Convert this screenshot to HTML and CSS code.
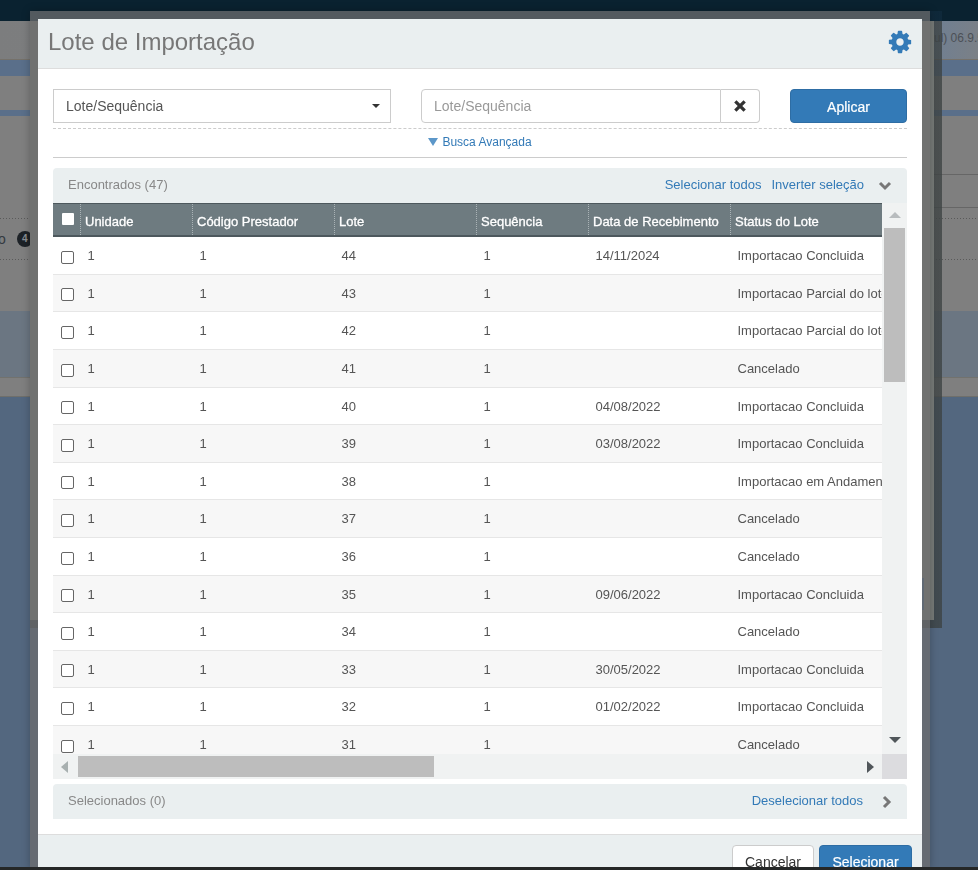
FILE: index.html
```html
<!DOCTYPE html>
<html lang="pt-BR">
<head>
<meta charset="utf-8">
<title>Lote de Importação</title>
<link rel="stylesheet" href="styles.css">
</head>
<body>
<div class="page">
  <div class="top"></div>
  <div class="pagehead"><span class="version">(Azul) 06.9.5</span></div>
  <div class="band band-a"></div>
  <div class="gray gray-a"></div>
  <div class="band band-b"></div>
  <div class="gray gray-b">
    <div class="badge-row"><span>o</span><b class="badge">4</b></div>
  </div>
  <div class="slate"></div>
  <div class="gray gray-c"></div>
</div>

<div class="layer layer-back"></div>
<div class="layer layer-mid"><i class="mid-btn"></i></div>
<div class="layer layer-veil"></div>

<main class="modal">
  <header class="modal-head">
    <h1>Lote de Importação</h1>
    <svg class="gear" viewBox="0 0 1792 1792"><path d="M1152 896q0-106-75-181t-181-75-181 75-75 181 75 181 181 75 181-75 75-181zm512-109v222q0 12-8 23t-20 13l-185 28q-19 54-39 91 35 50 107 138 10 12 10 25t-9 23q-27 37-99 108t-94 71q-12 0-26-9l-138-108q-44 23-91 38-16 136-29 186-7 28-36 28h-222q-14 0-24.5-8.5t-11.5-21.5l-28-184q-49-16-90-37l-141 107q-10 9-25 9-14 0-25-11-126-114-165-168-7-10-7-23 0-12 8-23 15-21 51-66.5t54-70.5q-27-50-41-99l-183-27q-13-2-21-12.5t-8-23.5v-222q0-12 8-23t19-13l186-28q14-46 39-92-40-57-107-138-10-12-10-24 0-10 9-23 26-36 98.5-107.5t94.5-71.5q13 0 26 10l138 107q44-23 91-38 16-136 29-186 7-28 36-28h222q14 0 24.5 8.5t11.5 21.5l28 184q49 16 90 37l142-107q9-9 24-9 13 0 25 10 129 119 165 170 7 8 7 22 0 12-8 23-15 21-51 66.5t-54 70.5q26 50 41 98l183 28q13 2 21 12.5t8 23.5z"/></svg>
  </header>

  <div class="modal-body">
    <div class="filters">
      <div class="select">Lote/Sequência<i class="caret"></i></div>
      <div class="search">
        <div class="search-input">Lote/Sequência</div>
        <div class="search-clear"><svg viewBox="0 0 12 12"><path d="M2 2l8 8M10 2l-8 8"/></svg></div>
      </div>
      <div class="apply">Aplicar</div>
    </div>
    <div class="advanced"><i class="adv-arrow"></i>Busca Avançada</div>

    <section class="found">
      <div class="panel-head">
        <span class="panel-title">Encontrados (47)</span>
        <span class="panel-links"><a>Selecionar todos</a><a>Inverter seleção</a></span>
        <svg class="chev" viewBox="0 0 14 10"><path d="M2 2l5 5 5-5"/></svg>
      </div>
      <div class="grid-wrap">
        <div class="viewport">
          <div class="row head">
            <div class="cell"><i class="check-head"></i></div>
            <div class="cell">Unidade</div>
            <div class="cell">Código Prestador</div>
            <div class="cell">Lote</div>
            <div class="cell">Sequência</div>
            <div class="cell">Data de Recebimento</div>
            <div class="cell">Status do Lote</div>
          </div>
          <div class="row"><div class="cell"><i class="check"></i></div><div class="cell">1</div><div class="cell">1</div><div class="cell">44</div><div class="cell">1</div><div class="cell">14/11/2024</div><div class="cell">Importacao Concluida</div></div>
          <div class="row"><div class="cell"><i class="check"></i></div><div class="cell">1</div><div class="cell">1</div><div class="cell">43</div><div class="cell">1</div><div class="cell"></div><div class="cell">Importacao Parcial do lote</div></div>
          <div class="row"><div class="cell"><i class="check"></i></div><div class="cell">1</div><div class="cell">1</div><div class="cell">42</div><div class="cell">1</div><div class="cell"></div><div class="cell">Importacao Parcial do lote</div></div>
          <div class="row"><div class="cell"><i class="check"></i></div><div class="cell">1</div><div class="cell">1</div><div class="cell">41</div><div class="cell">1</div><div class="cell"></div><div class="cell">Cancelado</div></div>
          <div class="row"><div class="cell"><i class="check"></i></div><div class="cell">1</div><div class="cell">1</div><div class="cell">40</div><div class="cell">1</div><div class="cell">04/08/2022</div><div class="cell">Importacao Concluida</div></div>
          <div class="row"><div class="cell"><i class="check"></i></div><div class="cell">1</div><div class="cell">1</div><div class="cell">39</div><div class="cell">1</div><div class="cell">03/08/2022</div><div class="cell">Importacao Concluida</div></div>
          <div class="row"><div class="cell"><i class="check"></i></div><div class="cell">1</div><div class="cell">1</div><div class="cell">38</div><div class="cell">1</div><div class="cell"></div><div class="cell">Importacao em Andamento</div></div>
          <div class="row"><div class="cell"><i class="check"></i></div><div class="cell">1</div><div class="cell">1</div><div class="cell">37</div><div class="cell">1</div><div class="cell"></div><div class="cell">Cancelado</div></div>
          <div class="row"><div class="cell"><i class="check"></i></div><div class="cell">1</div><div class="cell">1</div><div class="cell">36</div><div class="cell">1</div><div class="cell"></div><div class="cell">Cancelado</div></div>
          <div class="row"><div class="cell"><i class="check"></i></div><div class="cell">1</div><div class="cell">1</div><div class="cell">35</div><div class="cell">1</div><div class="cell">09/06/2022</div><div class="cell">Importacao Concluida</div></div>
          <div class="row"><div class="cell"><i class="check"></i></div><div class="cell">1</div><div class="cell">1</div><div class="cell">34</div><div class="cell">1</div><div class="cell"></div><div class="cell">Cancelado</div></div>
          <div class="row"><div class="cell"><i class="check"></i></div><div class="cell">1</div><div class="cell">1</div><div class="cell">33</div><div class="cell">1</div><div class="cell">30/05/2022</div><div class="cell">Importacao Concluida</div></div>
          <div class="row"><div class="cell"><i class="check"></i></div><div class="cell">1</div><div class="cell">1</div><div class="cell">32</div><div class="cell">1</div><div class="cell">01/02/2022</div><div class="cell">Importacao Concluida</div></div>
          <div class="row"><div class="cell"><i class="check"></i></div><div class="cell">1</div><div class="cell">1</div><div class="cell">31</div><div class="cell">1</div><div class="cell"></div><div class="cell">Cancelado</div></div>
        </div>
        <div class="vbar">
          <i class="arr arr-up"></i>
          <i class="vthumb"></i>
          <i class="arr arr-down"></i>
        </div>
        <div class="hbar">
          <i class="arr arr-left"></i>
          <i class="hthumb"></i>
          <i class="arr arr-right"></i>
        </div>
        <div class="corner"></div>
      </div>
    </section>

    <section class="selected">
      <span class="panel-title">Selecionados (0)</span>
      <span class="panel-links"><a>Deselecionar todos</a></span>
      <svg class="chev chev-right" viewBox="0 0 10 14"><path d="M2 2l5 5-5 5"/></svg>
    </section>
  </div>

  <footer class="modal-foot">
    <div class="btn btn-cancel">Cancelar</div>
    <div class="btn btn-select">Selecionar</div>
  </footer>
</main>
<div class="strip"></div>
</body>
</html>
```
FILE: styles.css
```css
* { box-sizing: border-box; }
html, body { margin: 0; height: 870px; overflow: hidden; }
body { background: #53677f; font-family: "Liberation Sans", Arial, sans-serif; color: #555; position: relative; width: 978px; }

/* page behind the dialogs */
.page { display: flex; flex-direction: column; height: 870px; }
.top { height: 21px; background: #0a2230; }
.pagehead { height: 39px; background: linear-gradient(100deg, #7c7d7e 0, #7f8285 60%, #6f7f92 95%, #7b8086 100%); border-bottom: 1px solid #75716a; display: flex; justify-content: flex-end; align-items: center; overflow: hidden; }
.version { font-size: 12px; color: #4c5056; white-space: nowrap; margin-right: -6px; position: relative; top: -2px; }
.band { background: #5a6f8a; }
.band-a { height: 16px; }
.band-b { height: 6px; }
.gray { background: #7f7f7f; }
.gray-a { height: 34px; }
.gray-b { height: 195px; position: relative; background:
  linear-gradient(#666, #666) right 58px / 60px 1px no-repeat,
  linear-gradient(#666, #666) right 91px / 60px 1px no-repeat,
  repeating-linear-gradient(90deg, #5a5a5a 0 1px, transparent 1px 3px) 0 102px / 100% 1px no-repeat,
  repeating-linear-gradient(90deg, #5a5a5a 0 1px, transparent 1px 3px) 0 143px / 100% 1px no-repeat,
  #7f7f7f; }
.badge-row { display: flex; align-items: center; gap: 11px; padding-top: 115px; font-size: 14px; color: #333a40; overflow: hidden; }
.badge-row span { margin-left: -2px; }
.badge { width: 16px; height: 16px; border-radius: 50%; background: #1d2227; color: #8a8f94; font-size: 10px; text-align: center; line-height: 16px; }
.slate { height: 66px; background: #6b7682; }
.gray-c { height: 20px; border-top: 1px solid #72726e; border-bottom: 1px solid #6f6f6b; }

/* stacked dialogs */
.layer { position: absolute; }
.layer-back { left: 30px; top: 11px; width: 912px; height: 617px; background: linear-gradient(rgba(16, 42, 60, .85) 0 10px, rgba(60, 66, 66, .78) 10px); }
.layer-mid { left: 30px; top: 21px; width: 904px; height: 599px; background: #777b78; }
.mid-btn { position: absolute; right: 10px; top: 557px; width: 2px; height: 32px; background: #3f5f86; }
.layer-veil { left: 30px; top: 11px; width: 900px; height: 859px; background: rgba(110, 110, 110, .72); box-shadow: 0 0 8px rgba(0, 0, 0, .25); }

/* main dialog */
.modal { position: absolute; left: 38px; top: 19px; width: 884px; height: 851px; background: #fff; display: flex; flex-direction: column; will-change: transform; }
.modal-head { height: 50px; flex: none; background: #eaeff0; border-bottom: 1px solid #ddd; display: flex; justify-content: space-between; align-items: center; padding: 0 10px; }
.modal-head h1 { margin: 0; font-size: 24px; font-weight: 400; color: #777; line-height: 46px; position: relative; top: -2px; }
.gear { width: 26px; height: 26px; fill: #337ab7; position: relative; top: -2px; left: 1px; }
.modal-body { flex: 1; padding: 20px 15px 0; min-height: 0; }

.filters { display: flex; height: 34px; }
.select { width: 338px; border: 1px solid #ccc; font-size: 14px; line-height: 32px; padding-left: 12px; color: #555; position: relative; }
.caret { position: absolute; left: 318px; top: 14px; border: 4px solid transparent; border-top-color: #333; border-bottom: 0; }
.search { display: flex; margin-left: 30px; width: 339px; }
.search-input { width: 300px; border: 1px solid #ccc; border-radius: 4px 0 0 4px; font-size: 14px; line-height: 32px; padding-left: 12px; color: #999; }
.search-clear { width: 39px; border: 1px solid #ccc; border-left: 0; border-radius: 0 4px 4px 0; display: flex; align-items: center; justify-content: center; }
.search-clear svg { width: 14px; height: 14px; fill: none; stroke: #333; stroke-width: 2.8; }
.apply { width: 117px; margin-left: 30px; background: #337ab7; border: 1px solid #2e6da4; border-radius: 4px; color: #fff; text-align: center; font-size: 14px; line-height: 34px; -webkit-text-stroke: .2px #fff; }

.advanced { margin-top: 5px; height: 30px; border-top: 1px dashed #ccc; border-bottom: 1px solid #ccc; font-size: 12px; line-height: 26px; color: #337ab7; text-align: center; }
.adv-arrow { display: inline-block; margin-right: 4px; border: 5px solid transparent; border-top: 8px solid #5c97c9; border-bottom: 0; }

.found { margin-top: 10px; }
.panel-head { height: 35px; background: #eaeff0; border-radius: 4px 4px 0 0; display: flex; align-items: center; padding: 0 15px; }
.panel-title { font-size: 13px; color: #888; line-height: 33px; height: 35px; }
.panel-links { margin-left: auto; display: flex; gap: 10px; font-size: 13px; color: #337ab7; line-height: 33px; height: 35px; }
.chev { width: 14px; height: 10px; fill: none; stroke: #777; stroke-width: 3; margin-left: 14px; }
.chev-right { width: 10px; height: 14px; margin-left: 19px; }

.grid-wrap { display: grid; grid-template-columns: 829px 25px; grid-template-rows: 551px 25px; }
.viewport { overflow: hidden; }
.row { display: grid; grid-template-columns: 27px 112px 142px 142px 112px 142px 200px; width: 877px; height: 37.6px; border-bottom: 1px solid #e6e6e6; font-size: 13px; background: #fff; }
.row:nth-child(odd) { background: #f7f7f7; }
.row .cell { padding-left: 7.5px; line-height: 38px; white-space: nowrap; overflow: hidden; color: #555; }
.row .cell:first-child { padding: 13.5px 0 0 8px; }
.row.head { height: 34.3px; background: #6e7b80; border-top: 1px solid #4d585d; border-bottom: 2px solid #4d585d; }
.row.head .cell { color: #fff; padding-left: 4px; line-height: 35px; border-left: 1px dotted #aab3b6; -webkit-text-stroke: .3px #fff; }
.row.head .cell:first-child { border-left: 0; padding: 9px 0 0 9px; }
.check { display: block; width: 13px; height: 13px; border: 1px solid #666; border-radius: 2px; background: #fff; }
.check-head { display: block; width: 12px; height: 12px; background: #fff; border-radius: 1px; }

.vbar { background: #f0f2f2; display: flex; flex-direction: column; align-items: center; }
.vthumb { width: 21px; height: 154px; background: #bdbdbd; margin-top: 10px; }
.hbar { background: #f0f2f2; display: flex; align-items: center; padding-left: 8px; }
.hthumb { width: 356px; height: 21px; background: #bdbdbd; margin-left: 10px; }
.corner { background: #dcdcdf; }
.arr { display: block; flex: none; width: 0; height: 0; border: 6px solid transparent; }
.arr-up { border-top: 0; border-bottom-color: #b8bcbe; margin-top: 9px; }
.arr-down { border-bottom: 0; border-top-color: #50565a; margin-top: auto; margin-bottom: 11px; }
.arr-left { border-left: 0; border-right-color: #a8b0b0; border-width: 6px 7px 6px 0; }
.arr-right { border-right: 0; border-left-color: #50565a; margin-left: 433px; border-width: 6px 0 6px 7px; }

.selected { margin-top: 5px; height: 35px; background: #eaeff0; border-radius: 4px 4px 0 0; display: flex; align-items: center; padding: 0 15px; }

.modal-foot { flex: none; height: 36px; background: #eaeff0; border-top: 1px solid #ddd; display: flex; justify-content: flex-end; align-items: flex-start; padding: 10px 10px 0 0; gap: 5px; }
.btn { height: 34px; border-radius: 4px; font-size: 14px; line-height: 32px; text-align: center; border: 1px solid #ccc; }
.btn-cancel { width: 82px; background: #fff; color: #333; }
.btn-select { width: 93px; background: #337ab7; border-color: #2e6da4; color: #fff; -webkit-text-stroke: .2px #fff; }

.strip { position: absolute; left: 0; right: 0; top: 867px; height: 3px; background: #252727; }
```
